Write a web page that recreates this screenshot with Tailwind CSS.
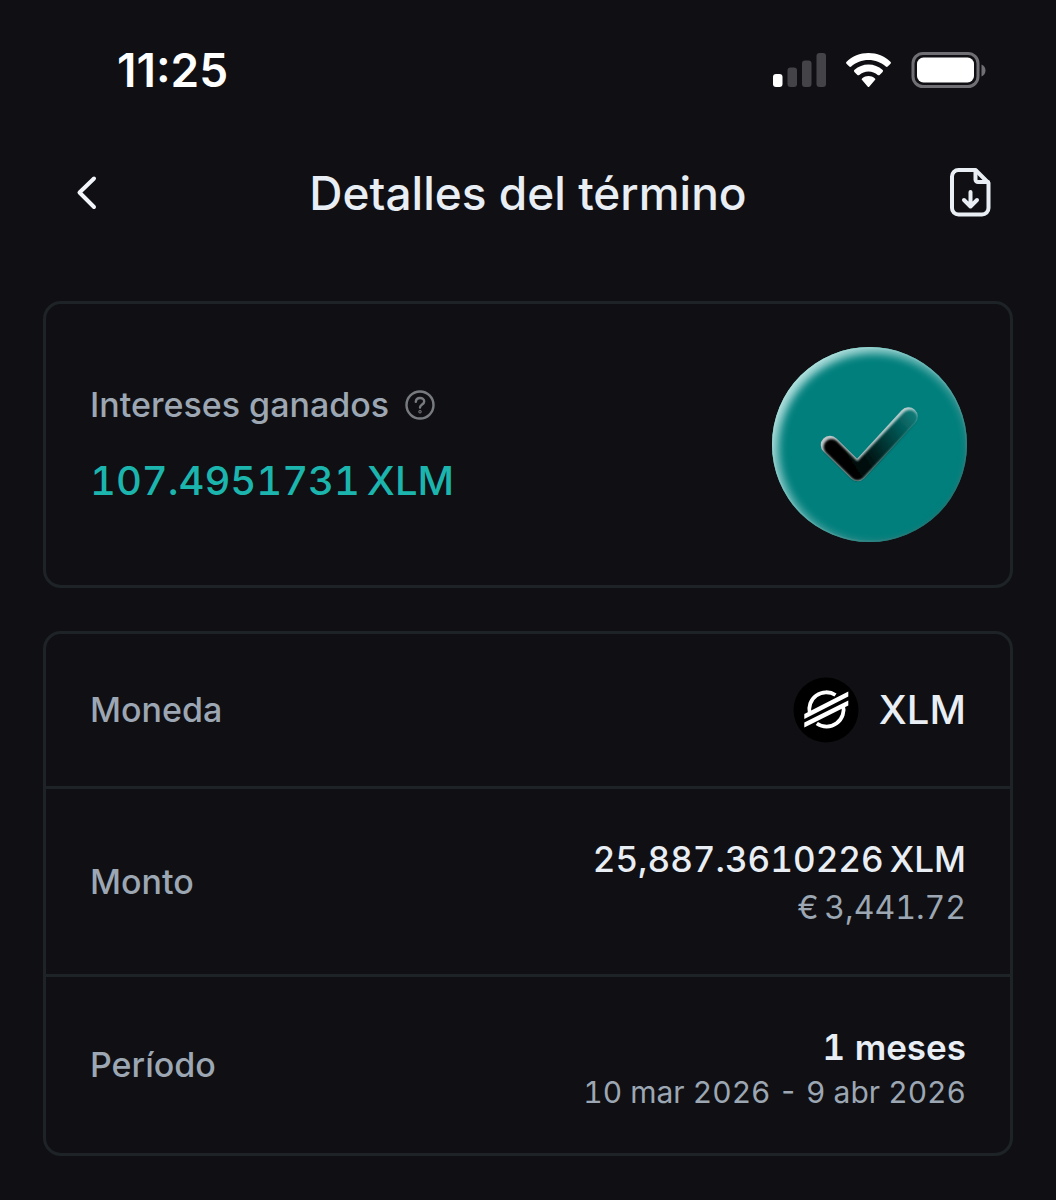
<!DOCTYPE html>
<html lang="es">
<head>
<meta charset="utf-8">
<meta name="viewport" content="width=device-width, initial-scale=1">
<title>Detalles del término</title>
<script src="https://cdn.jsdelivr.net/npm/@tailwindcss/browser@4"></script>
</head>
<body class="min-h-screen bg-[#101014] font-[Inter,sans-serif] text-[#e8eef4]">

<!-- Status bar -->
<div class="flex h-[140px] items-center justify-between pr-[70px] pl-[117px]">
  <span class="text-[46px] leading-[56px] font-semibold text-white">11:25</span>
  <div class="flex items-center gap-5">
    <svg class="h-9 w-[54px]" viewBox="0 0 54 36" aria-label="Señal">
      <rect x="1" y="22" width="9.500" height="13" rx="3" fill="#fff"/>
      <g fill="#434348"><rect x="15.500" y="15.500" width="9.500" height="19.500" rx="3"/><rect x="30" y="8.500" width="9.500" height="26.500" rx="3"/><rect x="44.500" y="1" width="9.500" height="34" rx="3"/></g>
    </svg>
    <svg class="h-9 w-[45px]" viewBox="0 0 45 36" fill="#fff" aria-label="Wi-Fi">
      <path d="M22.500 1C14 1 6.200 4.300.600 9.700c-.700.700-.700 1.500-.100 2.100l2.800 2.800c.600.600 1.300.600 1.900 0C9.800 10.400 15.800 8 22.500 8s12.700 2.400 17.300 6.600c.600.600 1.300.600 1.900 0l2.800-2.800c.600-.600.600-1.400-.100-2.100C38.800 4.300 31 1 22.500 1z"/>
      <path d="M22.500 12.500c-5.300 0-10.200 2-13.900 5.300-.800.700-.800 1.500-.200 2.100l3 3c.600.600 1.200.600 1.900 0 2.400-2.100 5.700-3.400 9.200-3.400s6.800 1.300 9.200 3.400c.700.600 1.300.600 1.900 0l3-3c.600-.600.600-1.400-.200-2.100-3.700-3.300-8.600-5.300-13.900-5.300z"/>
      <path d="M22.500 24c-2.300 0-4.500.800-6.200 2.200-.800.700-.800 1.300-.200 1.900l5.500 6.300c.600.700 1.200.700 1.800 0l5.500-6.300c.600-.600.600-1.200-.200-1.900-1.700-1.400-3.900-2.200-6.200-2.200z"/>
    </svg>
    <svg class="h-9 w-[75px]" viewBox="0 0 75 36" aria-label="Batería">
      <rect x="2" y="1.500" width="65" height="33" rx="10" fill="none" stroke="#707074" stroke-width="3"/>
      <rect x="6" y="5.500" width="57" height="25" rx="6.500" fill="#fff"/>
      <path d="M70.500 12.500v12c2.400-1 4-3.300 4-6s-1.600-5-4-6z" fill="#707074"/>
    </svg>
  </div>
</div>

<!-- Title bar -->
<header class="grid h-[106px] grid-cols-[48px_1fr_48px] items-center px-[62px]">
  <button type="button" aria-label="Volver" class="flex size-12 items-center justify-center">
    <svg class="h-9 w-6" viewBox="0 0 24 36" fill="none" stroke="#f2f6fa" stroke-width="4" stroke-linecap="round" stroke-linejoin="round"><path d="M20 3.500 5.500 17.500 20 32"/></svg>
  </button>
  <h1 class="text-center text-[46px] leading-[56px] font-medium">Detalles del término</h1>
  <button type="button" aria-label="Descargar" class="flex h-[50px] w-12 items-center justify-center">
    <svg class="h-[50px] w-[42px] shrink-0" viewBox="0 0 42 50" fill="none" stroke="#e8eef4" stroke-width="4" stroke-linecap="round" stroke-linejoin="round">
      <path d="M26.500 2H9.500A6.500 6.500 0 0 0 3 8.500v31.500A6.500 6.500 0 0 0 9.500 46.500h23.500a6.500 6.500 0 0 0 6.500-6.500V15L26.500 2z"/>
      <path d="M26.500 2.500v9a2.500 2.500 0 0 0 2.500 2.500h10"/><path d="M21.500 24v14M15 32l6.500 6.500L28 32"/>
    </svg>
  </button>
</header>

<main class="flex flex-col gap-[43px] px-[43px] pt-[55px] pb-11">

  <!-- Earned interest -->
  <section class="flex items-center justify-between rounded-[18px] border-3 border-[#1e2327] py-[43px] pr-[43px] pl-11">
    <div class="pt-1">
      <div class="flex items-center gap-4 text-[#9ca7b3]">
        <h2 class="text-[34px] leading-[44px] font-medium">Intereses ganados</h2>
        <button type="button" aria-label="Ayuda" class="text-[#777b80]">
          <svg class="size-[30px]" viewBox="0 0 30 30" fill="none" stroke="currentColor" stroke-width="2.400" stroke-linecap="round"><circle cx="15" cy="15" r="13.500"/><path d="M10.800 11.800c.200-2.400 1.900-3.800 4.200-3.800s4.200 1.400 4.200 3.600c0 3-4.200 3-4.200 6"/><circle cx="15" cy="21.800" r=".5"/></svg>
        </button>
      </div>
      <p class="mt-6 text-[40px] leading-[60px] font-medium tabular-nums text-[#1bb5ae]">107.4951731&#8201;XLM</p>
    </div>
    <svg class="size-[195px]" viewBox="0 0 195 195" role="img" aria-label="Completado">
      <defs>
        <clipPath id="disc"><circle cx="97.500" cy="97.500" r="97.500"/></clipPath>
        <filter id="soft" x="-20%" y="-20%" width="140%" height="140%"><feGaussianBlur stdDeviation="4.500"/></filter>
        <filter id="edge" x="-20%" y="-20%" width="140%" height="140%"><feGaussianBlur stdDeviation="0.800"/></filter>
        <linearGradient id="rim" x1="0.100" y1="0.150" x2="0.850" y2="0.850"><stop offset="0" stop-color="#b4e2e0"/><stop offset=".5" stop-color="#68b5b3"/><stop offset="1" stop-color="#28706e"/></linearGradient>
        <linearGradient id="tick" gradientUnits="userSpaceOnUse" x1="72" y1="118" x2="144" y2="72"><stop offset="0" stop-color="#000"/><stop offset=".25" stop-color="#04100f"/><stop offset=".65" stop-color="#054644"/><stop offset="1" stop-color="#087875"/></linearGradient>
        <linearGradient id="shine" gradientUnits="userSpaceOnUse" x1="50" y1="70" x2="120" y2="130"><stop offset="0" stop-color="#c4c4c6"/><stop offset=".65" stop-color="#b5cdcc"/><stop offset="1" stop-color="#318a87"/></linearGradient>
      </defs>
      <circle cx="97.500" cy="97.500" r="97.500" fill="#007f7c"/>
      <g clip-path="url(#disc)" fill="none">
        <circle cx="101" cy="101" r="103" stroke="url(#rim)" stroke-width="17" filter="url(#soft)"/>
        <circle cx="97.500" cy="97.500" r="97" stroke="url(#rim)" stroke-width="2" opacity=".6"/>
      </g>
      <g fill="none" stroke-linecap="round" stroke-linejoin="round">
        <path d="M58 98 85.500 125 136.500 69.500" stroke="url(#shine)" stroke-width="18.500"/>
        <path d="M59.500 100 85.500 125.500 137.500 71" stroke="url(#tick)" stroke-width="16" filter="url(#edge)"/>
      </g>
    </svg>
  </section>

  <!-- Term details -->
  <dl class="divide-y-3 divide-[#1e2327] rounded-[18px] border-3 border-[#1e2327]">
    <div class="flex h-[155px] items-center justify-between px-11">
      <dt class="text-[34px] leading-[44px] font-medium text-[#9ca7b3]">Moneda</dt>
      <dd class="flex items-center gap-5 text-[40px] leading-[52px] font-medium">
        <svg class="size-[66px]" viewBox="0 0 66 66" fill="none" aria-hidden="true">
          <circle cx="33" cy="33" r="32.500" fill="#000"/>
          <g stroke="#fff" stroke-width="3.800"><path d="M42.500 18A17 17 0 0 0 16.800 36.500M23.800 46.500A17 17 0 0 0 49.800 27.500"/></g>
          <path d="M11.300 37 55.300 14.500v5L11.300 42zM11.300 45.500l44-22v5l-44 22z" fill="#fff"/>
        </svg>
        XLM
      </dd>
    </div>
    <div class="flex h-[188px] items-center justify-between px-11">
      <dt class="text-[34px] leading-[44px] font-medium text-[#9ca7b3]">Monto</dt>
      <dd class="text-right">
        <span class="block text-[35px] leading-[52px] font-medium tabular-nums">25,887.3610226&#8201;XLM</span>
        <span class="block text-[32px] leading-[46px] text-[#9ca7b3] tabular-nums">€&#8201;3,441.72</span>
      </dd>
    </div>
    <div class="flex h-[176px] items-center justify-between px-11">
      <dt class="text-[34px] leading-[44px] font-medium text-[#9ca7b3]">Período</dt>
      <dd class="pt-2 text-right">
        <span class="block text-[35px] leading-[46px] font-semibold tabular-nums">1 meses</span>
        <span class="block text-[30px] leading-[44px] text-[#9ca7b3] tabular-nums">10 mar 2026 - 9 abr 2026</span>
      </dd>
    </div>
  </dl>
</main>
</body>
</html>
